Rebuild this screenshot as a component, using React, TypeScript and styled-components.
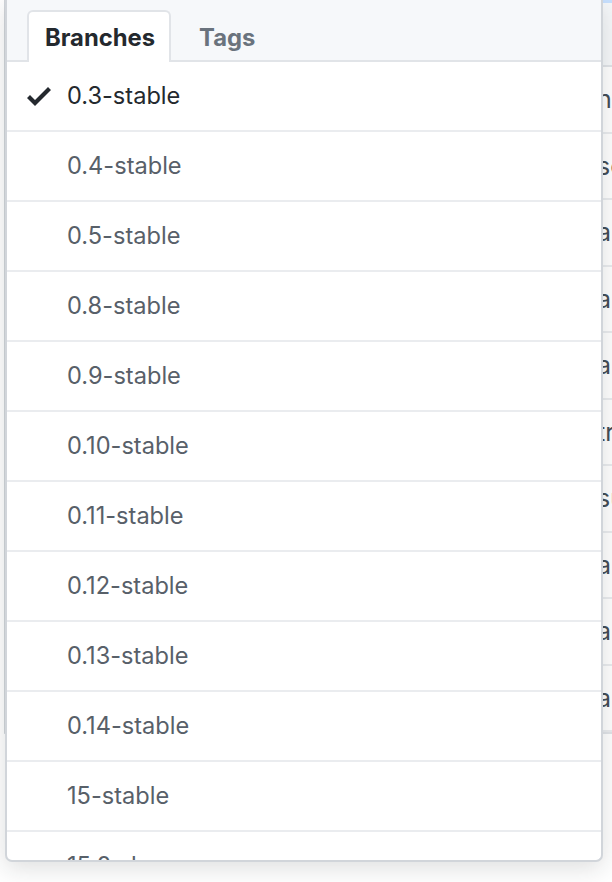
import React from "react";
import styled, { createGlobalStyle } from "styled-components";

const Global = createGlobalStyle`
  html, body { margin: 0; padding: 0; background: #ffffff; }
  body { width: 612px; height: 882px; overflow: hidden; font-family: Inter, "Liberation Sans", sans-serif; }
  * { box-sizing: border-box; }
`;

const Page = styled.div`
  position: relative;
  width: 612px;
  height: 882px;
  overflow: hidden;
`;

const FileBox = styled.div`
  margin-left: 4px;
  width: 700px;
  border-left: 2px solid #d1d5da;
  border-bottom: 2px solid #e1e4e8;
`;

const FileHeader = styled.div`
  height: 67px;
  background: #f6f8fa;
  border-top: 3px solid #c8e1ff;
  border-bottom: 2px solid #e1e4e8;
`;

const FileRow = styled.div`
  height: 66.5px;
  display: flex;
  align-items: center;
  padding-left: 591px;
  border-bottom: 2px solid #eaecef;
  font-size: 25px;
  color: #444d56;
  background: #fff;
`;

const Dropdown = styled.div`
  position: absolute;
  left: 5px;
  top: 0;
  width: 598px;
  height: 862px;
  display: flex;
  flex-direction: column;
  background: #fff;
  border: 2px solid #d1d5da;
  border-top: none;
  border-radius: 0 0 7px 7px;
  box-shadow: 0 6px 24px rgba(27, 31, 35, 0.15);
  overflow: hidden;
`;

const TabBar = styled.div`
  flex: none;
  height: 62px;
  display: flex;
  align-items: flex-end;
  gap: 10px;
  padding-left: 20px;
  background: #f6f8fa;
  border-bottom: 2px solid #e1e4e8;
`;

const Tab = styled.div<{ $active?: boolean }>`
  height: 52px;
  margin-bottom: -2px;
  padding: 0 14px 0 16px;
  display: flex;
  align-items: center;
  font-size: 23.8px;
  font-weight: 700;
  color: ${(p) => (p.$active ? "#24292e" : "#6a737d")};
  background: ${(p) => (p.$active ? "#fff" : "transparent")};
  border: 2px solid ${(p) => (p.$active ? "#e1e4e8" : "transparent")};
  border-bottom: none;
  border-radius: 6px 6px 0 0;
`;

const List = styled.div`
  flex: 1;
  overflow: hidden;
`;

const Item = styled.div<{ $selected?: boolean }>`
  height: 70px;
  display: flex;
  align-items: center;
  padding-left: 20px;
  padding-bottom: 1px;
  border-bottom: 2px solid #eaecef;
  font-size: 23.6px;
  color: ${(p) => (p.$selected ? "#24292e" : "#586069")};
`;

const CheckSlot = styled.span`
  width: 40px;
  flex: none;
  display: flex;
  align-items: center;
`;

const Check = () => (
  <svg width="24" height="32" viewBox="0 0 12 16" aria-hidden="true">
    <path fill="#24292e" fillRule="evenodd" d="M12 5l-8 8-4-4 1.5-1.5L4 10l6.5-6.5L12 5z" />
  </svg>
);

const branches = [
  "0.3-stable",
  "0.4-stable",
  "0.5-stable",
  "0.8-stable",
  "0.9-stable",
  "0.10-stable",
  "0.11-stable",
  "0.12-stable",
  "0.13-stable",
  "0.14-stable",
  "15-stable",
  "15.0-dev",
];

const bgRows = ["ng", "sc", "a", "a", "a", "tr", "su", "a", "a", "a"];

export default function App() {
  return (
    <Page>
      <Global />
      <FileBox>
        <FileHeader />
        {bgRows.map((t, i) => (
          <FileRow key={i}>{t}</FileRow>
        ))}
      </FileBox>
      <Dropdown>
        <TabBar>
          <Tab $active>Branches</Tab>
          <Tab>Tags</Tab>
        </TabBar>
        <List>
          {branches.map((b, i) => (
            <Item key={b} $selected={i === 0}>
              <CheckSlot>{i === 0 ? <Check /> : null}</CheckSlot>
              {b}
            </Item>
          ))}
        </List>
      </Dropdown>
    </Page>
  );
}
